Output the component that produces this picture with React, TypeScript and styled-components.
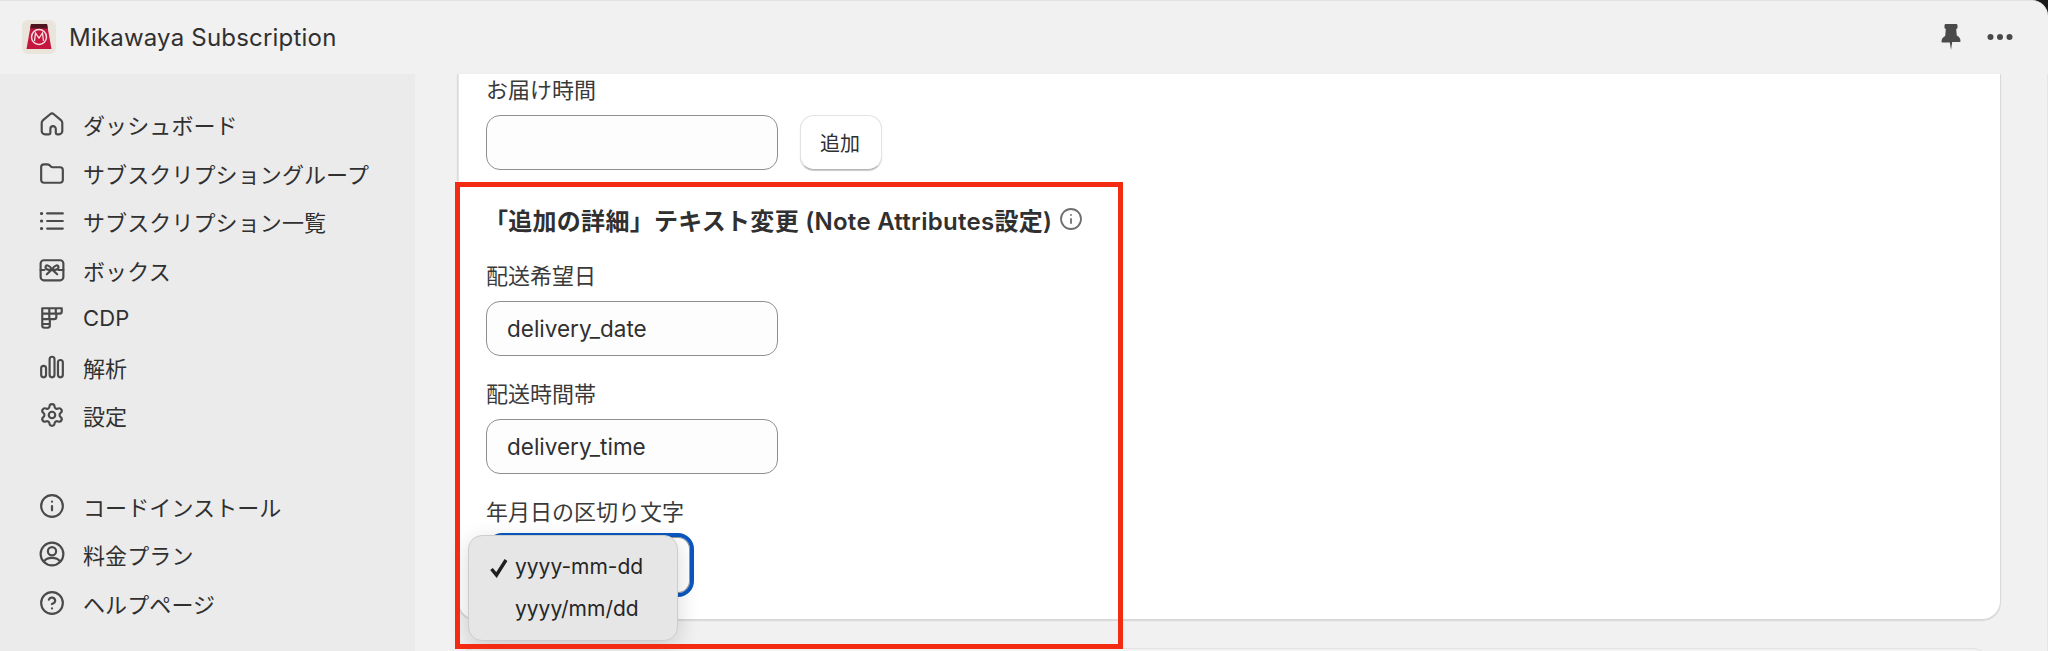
import React from "react";
import styled, { createGlobalStyle } from "styled-components";
import { CircleHelp, Info, Settings } from "lucide-react";

const GlobalStyle = createGlobalStyle`
  html, body {
    margin: 0;
    padding: 0;
    background: #1a1a1a;
    overflow: hidden;
  }
  * {
    box-sizing: border-box;
  }
`;

const Window = styled.div`
  position: relative;
  width: 2048px;
  height: 651px;
  overflow: hidden;
  display: flex;
  flex-direction: column;
  background: #f1f1f1;
  border-top: 1px solid #e2e2e2;
  border-top-right-radius: 16px;
  color: #303030;
  font-family: Inter, "Noto Sans CJK JP", sans-serif;
`;

const TopBar = styled.header`
  height: 73px;
  flex: none;
  display: flex;
  align-items: center;
  padding: 0 35px 1px 22px;
`;

const AppTitle = styled.span`
  margin-left: 13px;
  font-size: 24px;
  letter-spacing: 0.2px;
  flex: 1;
`;

const TopActions = styled.div`
  display: flex;
  align-items: center;
  gap: 26px;
  color: #4a4a4a;
`;

const Body = styled.div`
  flex: 1;
  display: flex;
  min-height: 0;
`;

const Sidebar = styled.nav`
  width: 415px;
  flex: none;
  background: #ebebeb;
  padding-top: 26px;
`;

const NavGroup = styled.ul<{ $gap?: number }>`
  list-style: none;
  margin: 0 0 ${({ $gap }) => $gap ?? 0}px;
  padding: 0;
`;

const NavItem = styled.li`
  height: 48.5px;
  display: flex;
  align-items: center;
  gap: 18px;
  padding-left: 39px;
  font-size: 22px;
  letter-spacing: 0.1px;
  color: #303030;
  white-space: nowrap;
  svg {
    flex: none;
    color: #4a4a4a;
  }
`;

const Main = styled.main`
  flex: 1;
  min-width: 0;
  padding: 0 47px 0 43px;
  border-right: 1px solid #e6e6e6;
`;

const Card = styled.section`
  background: #fff;
  padding: 1px 28px 22px 27px;
  border-radius: 0 0 18px 18px;
  border-left: 1px solid #e6e6e6;
  box-shadow: 0 1px 1px 1px #d8d8d8;
`;

const NextCard = styled.div`
  height: 40px;
  margin: 29px 11px 0 0;
  background: #f3f3f3;
  border-radius: 16px 16px 0 0;
  border: 1px solid #e2e2e2;
`;

const Field = styled.div`
  margin-top: 23px;
`;

const Label = styled.label`
  display: block;
  height: 30px;
  line-height: 30px;
  margin-bottom: 10px;
  font-size: 22px;
  color: #3a3a3a;
`;

const InputRow = styled.div`
  display: flex;
  align-items: center;
  gap: 22px;
`;

const TextBox = styled.div`
  width: 292px;
  height: 55px;
  display: flex;
  align-items: center;
  padding: 0 20px;
  background: #fdfdfd;
  border: 1px solid #8f8f8f;
  border-radius: 14px;
  font-size: 22.5px;
  color: #303030;
`;

const Button = styled.button`
  width: 82px;
  height: 55px;
  padding: 0 2px 0 0;
  background: #fff;
  border: 1px solid #e3e3e3;
  border-bottom-color: #b5b5b5;
  border-radius: 14px;
  box-shadow: 0 1px 1px #c9c9c9;
  font-family: inherit;
  font-size: 20px;
  color: #303030;
`;

const SectionTitle = styled.h2`
  display: flex;
  align-items: center;
  gap: 7px;
  height: 32px;
  margin: 33px 0 26px -2px;
  font-size: 24px;
  font-weight: 600;
  letter-spacing: 0.28px;
  color: #303030;
  white-space: nowrap;
  svg {
    color: #6f6f6f;
  }
`;

const SelectBox = styled.div`
  position: relative;
  width: 208px;
  height: 64px;
  margin-top: -4px;
  border: 4px solid #0b57c0;
  border-radius: 16px;
  background: #fff;
  box-shadow: inset 0 0 0 1px #999;
`;

const Menu = styled.ul`
  position: absolute;
  left: -22px;
  top: -2px;
  width: 210px;
  height: 106px;
  margin: 0;
  padding: 10px 0;
  list-style: none;
  background: #e6e6e6;
  border: 1px solid #cdcdcd;
  border-radius: 14px;
  box-shadow: 0 6px 22px rgba(0, 0, 0, 0.16);
`;

const MenuOption = styled.li`
  position: relative;
  height: 42px;
  line-height: 42px;
  padding-left: 46px;
  font-size: 21px;
  color: #262626;
  svg {
    position: absolute;
    left: 21px;
    top: 12px;
  }
`;

// review highlight drawn on top of the screenshot
const Highlight = styled.div`
  position: absolute;
  left: 455px;
  top: 181px;
  width: 668px;
  height: 467px;
  border: 5px solid #f22b12;
  pointer-events: none;
`;

const Logo = () => (
  <svg width="34" height="34" viewBox="0 0 34 34">
    <rect width="34" height="34" rx="6" fill="#e9e5da" />
    <path d="M9 4h16l4.500 25H4.500z" fill="#c5163f" />
    <path d="M9 4h16l.8 4.500H8.200z" fill="#4d1420" />
    <circle cx="17" cy="17" r="7.500" fill="none" stroke="#f6dfe2" strokeWidth="1.500" />
    <path d="M12.500 21l1-8 3.500 5 3.500-5 1 8" fill="none" stroke="#f6dfe2" strokeWidth="1.300" />
  </svg>
);

const iconProps = {
  width: 26,
  height: 26,
  viewBox: "0 0 24 24",
  fill: "none",
  stroke: "currentColor",
  strokeWidth: 2,
  strokeLinecap: "round" as const,
  strokeLinejoin: "round" as const,
};

const HomeIcon = () => (
  <svg {...iconProps}>
    <path d="M2.500 11c0-.9.4-1.700 1-2.300l6.800-5.700a2.600 2.600 0 0 1 3.400 0l6.800 5.700c.6.600 1 1.400 1 2.300v7.500a3 3 0 0 1-3 3h-1.700a1.300 1.300 0 0 1-1.300-1.300v-3.700a2.500 2.500 0 0 0-5 0v3.700a1.300 1.300 0 0 1-1.300 1.300H5.500a3 3 0 0 1-3-3z" />
  </svg>
);

const FolderIcon = () => (
  <svg {...iconProps}>
    <path d="M2 6.500A2.500 2.500 0 0 1 4.500 4h3.300c.7 0 1.300.3 1.800.7l1.300 1.300c.5.500 1.100.7 1.800.7h6.800A2.500 2.500 0 0 1 22 9.200v9.300a2.500 2.500 0 0 1-2.500 2.500h-15A2.500 2.500 0 0 1 2 18.500z" />
  </svg>
);

const ListIcon = () => (
  <svg {...iconProps}>
    <path d="M7.500 5H22M7.500 12H22M7.500 19H22" />
    <path d="M2.200 5h.3M2.200 12h.3M2.200 19h.3" strokeWidth="2.800" />
  </svg>
);

const GiftIcon = () => (
  <svg {...iconProps}>
    <rect x="1.500" y="3" width="21" height="18.500" rx="3" />
    <path d="M12 11.500C9.500 7 6 7 6 9.300s3.500 3.200 6 2.200c2.500 1 6 .1 6-2.200S14.500 7 12 11.500zM12 11.500l-4.800 4.500M12 11.500l4.800 4.500M18 12h4.500M1.500 12h3.500" />
  </svg>
);

const GridIcon = () => (
  <svg {...iconProps}>
    <path d="M3 3h18v3a2 2 0 0 1-2 2H3zM3 8h13v3a2 2 0 0 1-2 2H3zM3 13h7v6a2 2 0 0 1-2 2H5a2 2 0 0 1-2-2zM9.500 3v10M15.500 3v5M3 17.500h7" />
  </svg>
);

const ChartIcon = () => (
  <svg {...iconProps}>
    <rect x="2" y="11" width="4.500" height="10.500" rx="2.250" />
    <rect x="9.800" y="2.500" width="4.500" height="19" rx="2.250" />
    <rect x="17.500" y="5.500" width="4.500" height="16" rx="2.250" />
  </svg>
);

const UserIcon = () => (
  <svg {...iconProps}>
    <circle cx="12" cy="12" r="10.500" />
    <circle cx="12" cy="9.500" r="3.800" />
    <path d="M4.500 19c1.500-2.500 4.200-3.500 7.500-3.500s6 1 7.500 3.500" />
  </svg>
);

const PinIcon = () => (
  <svg width="20" height="28" viewBox="0 0 20 28" fill="currentColor">
    <path d="M3.500 2.500C3.500 1.500 4 1 5 1h10c1 0 1.500.5 1.500 1.500v2c0 .8-.5 1.300-1.300 1.500l.6 6.500c2.400 1 3.700 3 3.700 5.500 0 .6-.4 1-1 1h-7.300L10 27l-1.200-7.500H1.500c-.6 0-1-.4-1-1 0-2.500 1.300-4.500 3.700-5.500l.6-7C4 5.800 3.500 5.300 3.500 4.500z" />
  </svg>
);

const DotsIcon = () => (
  <svg width="26" height="8" viewBox="0 0 26 8" fill="currentColor">
    <circle cx="3.500" cy="4" r="3" />
    <circle cx="13" cy="4" r="3" />
    <circle cx="22.500" cy="4" r="3" />
  </svg>
);

const CheckIcon = () => (
  <svg width="18" height="20" viewBox="0 0 18 20" fill="none" stroke="#1f1f1f" strokeWidth="3.400">
    <path d="M1.500 11l5 6L16 2" />
  </svg>
);

const mainNav = [
  { label: "ダッシュボード", icon: <HomeIcon /> },
  { label: "サブスクリプショングループ", icon: <FolderIcon /> },
  { label: "サブスクリプション一覧", icon: <ListIcon /> },
  { label: "ボックス", icon: <GiftIcon /> },
  { label: "CDP", icon: <GridIcon /> },
  { label: "解析", icon: <ChartIcon /> },
  { label: "設定", icon: <Settings size={26} strokeWidth={2} /> },
];

const subNav = [
  { label: "コードインストール", icon: <Info size={26} strokeWidth={2} /> },
  { label: "料金プラン", icon: <UserIcon /> },
  { label: "ヘルプページ", icon: <CircleHelp size={26} strokeWidth={2} /> },
];

const App: React.FC = () => {
  return (
    <Window>
      <GlobalStyle />
      <TopBar>
        <Logo />
        <AppTitle>Mikawaya Subscription</AppTitle>
        <TopActions>
          <PinIcon />
          <DotsIcon />
        </TopActions>
      </TopBar>
      <Body>
        <Sidebar>
          <NavGroup $gap={42}>
            {mainNav.map((item) => (
              <NavItem key={item.label}>
                {item.icon}
                {item.label}
              </NavItem>
            ))}
          </NavGroup>
          <NavGroup>
            {subNav.map((item) => (
              <NavItem key={item.label}>
                {item.icon}
                {item.label}
              </NavItem>
            ))}
          </NavGroup>
        </Sidebar>
        <Main>
          <Card>
            <Label>お届け時間</Label>
            <InputRow>
              <TextBox />
              <Button>追加</Button>
            </InputRow>
            <SectionTitle>
              「追加の詳細」テキスト変更 (Note Attributes設定)
              <Info size={24} strokeWidth={1.8} />
            </SectionTitle>
            <Field>
              <Label>配送希望日</Label>
              <TextBox>delivery_date</TextBox>
            </Field>
            <Field>
              <Label>配送時間帯</Label>
              <TextBox>delivery_time</TextBox>
            </Field>
            <Field>
              <Label>年月日の区切り文字</Label>
              <SelectBox>
                <Menu>
                  <MenuOption>
                    <CheckIcon />
                    yyyy-mm-dd
                  </MenuOption>
                  <MenuOption>yyyy/mm/dd</MenuOption>
                </Menu>
              </SelectBox>
            </Field>
          </Card>
          <NextCard />
        </Main>
      </Body>
      <Highlight />
    </Window>
  );
};

export default App;
